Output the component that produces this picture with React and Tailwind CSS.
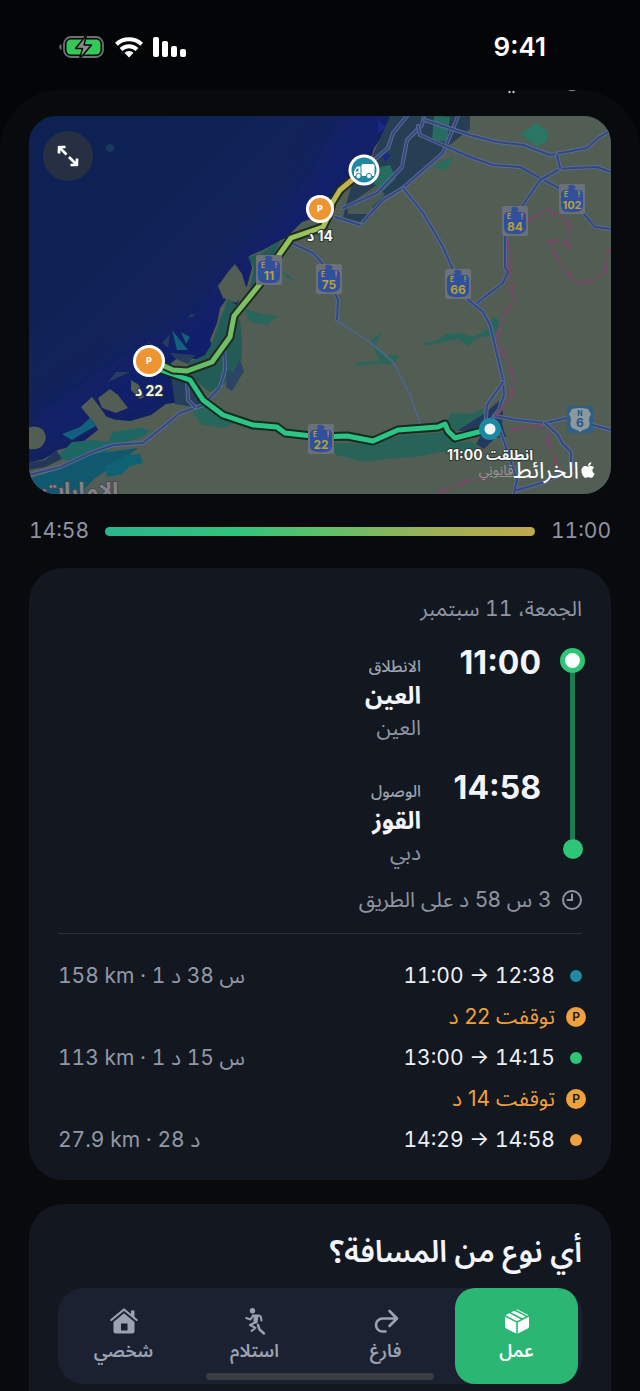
import { useState } from 'react';
import { FaApple } from 'react-icons/fa';

function StatusBar() {
  return (
    <header className="flex h-[90px] items-center justify-between pr-[94px] pl-[58px] pt-1">
      <span dir="ltr" className="text-[26px] leading-8 font-semibold text-white">9:41</span>
      <div dir="ltr" className="flex items-center gap-[10px]">
        <svg width="47" height="24" viewBox="0 0 47 24" aria-label="شحن البطارية" role="img">
          <path d="M3.500 9c-3 1-3 5 0 6z" fill="#6d6f73" />
          <rect x="6" y="2" width="39" height="20" rx="7" fill="none" stroke="#6d6f73" strokeWidth="1.800" />
          <rect x="8.500" y="4.500" width="34" height="15" rx="4.500" fill="#34c759" />
          <path d="M28.500 0 17.500 13.500h7l-3 10.500L33.500 10h-7.500z" fill="#8b8c8e" stroke="#050608" strokeWidth="1.400" strokeLinejoin="round" />
        </svg>
        <svg width="28" height="22" viewBox="0 0 28 22" aria-label="واي فاي" role="img">
          <g fill="none" stroke="#fff" strokeWidth="4">
            <path d="M1.400 8.300a18.500 18.500 0 0 1 25.200 0" />
            <path d="M6 13.500a11.500 11.500 0 0 1 16 0" />
          </g>
          <path d="M14 21.500 9.500 16.800a6.600 6.600 0 0 1 9 0z" fill="#fff" />
        </svg>
        <svg width="33" height="22" viewBox="0 0 33 22" fill="#fff" aria-label="الشبكة" role="img">
          <rect x="0" y="1" width="6" height="20" rx="2" />
          <rect x="9" y="5" width="6" height="16" rx="2" />
          <rect x="18" y="10" width="6" height="11" rx="2" />
          <rect x="27" y="13" width="6" height="8" rx="2" />
        </svg>
      </div>
    </header>
  );
}

const shields = [
  { x: 269, y: 270, n: '11' },
  { x: 329, y: 279, n: '75' },
  { x: 458, y: 284, n: '66' },
  { x: 515, y: 221, n: '84' },
  { x: 572, y: 199, n: '102' },
  { x: 321, y: 439, n: '22' },
];

const roads = [
  'M424 116 422 125 407 140 402 167 377 193 343 208',
  'M407 116 393 133 388 148 374 160',
  'M458 116 443 153 403 188 383 200 363 222',
  'M425 120 470 135 497 142 523 145 550 155 587 148 598 138 611 130',
  'M418 126 420 135 470 157 493 165 520 167 540 178 583 201',
  'M583 213 595 227 611 229',
  'M611 172 597 167 573 168 560 169 540 180 523 205 505 237 505 267 508 272 503 283 477 303',
  'M557 155 560 168',
  'M403 188 423 213 443 247 453 270 466 298 483 312 490 325 503 380 504 395 499 410 485 428',
  'M503 382 487 405 485 430',
  'M495 416 517 420 545 423 567 418M593 425 611 430',
  'M545 423 558 435 562 443 571 452 571 467M500 430 517 480 514 494M517 490 545 482 563 473',
  'M292 243 313 253 322 263 338 300 337 320',
  'M29 475 60 467 93 452 113 445 143 443 163 427 180 413 203 405 220 387 225 370 224 345',
  'M187 378 188 400 195 407M335 217 360 225',
];

function Shield({ x, y, n }) {
  return (
    <g transform={`translate(${x} ${y})`}>
      <rect x="-13" y="-15" width="26" height="30" rx="2" fill="#6c7078" />
      <path d="M-9-9Q-4-8-3-11L-4-13Q0-16 4-12L2-10Q5-8 9-9L11-6V6Q11 11 7 12.500Q0 14-7 12.500Q-11 11-11 6V-6z" fill="#31509c" />
      <g fontWeight="700" fill="#b5a13c" textAnchor="middle">
        <text x="-6" y="-2" fontSize="7">E</text>
        <text x="7" y="-2" fontSize="7">!</text>
        <text x="0" y="10" fontSize={n.length > 2 ? 11 : 12}>{n}</text>
      </g>
    </g>
  );
}

function Parking({ x, y, r }) {
  return (
    <g>
      <circle cx={x} cy={y} r={r} fill="#fff" />
      <circle cx={x} cy={y} r={r - 3} fill="#ee9430" />
      <text x={x} y={y + 3} fontSize="9" fontWeight="800" fill="#fff" textAnchor="middle">P</text>
    </g>
  );
}

function RouteMap() {
  const line = 'M149 361 162 365 173 370 187 371 212 362 230 337 234 316 260 284 279 255 291 238 323 227 328 217 332 203 340 190 364 170';
  const back = 'M149 366 190 380 203 400 223 415 253 425 277 427 285 433 321 437 347 436 373 441 398 430 438 427 445 424 448 431 455 438 490 429';
  return (
    <section className="relative overflow-hidden rounded-[27px]" aria-label="خريطة المسار">
      <svg viewBox="29 116 582 378" className="block w-full" direction="rtl">
        <defs>
          <linearGradient id="sea" gradientUnits="userSpaceOnUse" x1="60" y1="116" x2="270" y2="330">
            <stop offset="0" stopColor="#0d2153" />
            <stop offset="0.450" stopColor="#0f2256" />
            <stop offset="0.750" stopColor="#16245c" />
            <stop offset="1" stopColor="#111f66" />
          </linearGradient>
          <linearGradient id="leg" gradientUnits="userSpaceOnUse" x1="190" y1="370" x2="364" y2="170">
            <stop offset="0" stopColor="#66bd6a" />
            <stop offset="0.700" stopColor="#9cc45a" />
            <stop offset="0.850" stopColor="#bdb950" />
            <stop offset="1" stopColor="#c9a84a" />
          </linearGradient>
          <filter id="soft" x="-30%" y="-30%" width="160%" height="160%">
            <feGaussianBlur stdDeviation="12" />
          </filter>
        </defs>
        <rect x="29" y="116" width="582" height="378" fill="url(#sea)" />
        <path filter="url(#soft)" d="M350 100 300 190 240 250 200 310 140 345 29 420V460L120 420 200 370 270 270 345 200 420 100z" fill="#101e78" opacity="0.500" />
        <circle cx="110" cy="148" r="4" fill="#1d4560" opacity="0.700" />
        <path d="M390 116 384 133 374 148 368 168 350 184 335 204 320 216 302 222 286 238 281 240 263 250 249 256 252 268 247 286 240 297 236 307 228 297 220 308 217 323 210 340 214 350 200 360 180 356 165 368 188 384 180 402 166 404 151 415 130 421 108 419 99 406 92 397 82 408 92 418 98 430 80 444 58 450 44 459 29 463V494H611V116z" fill="#525d54" />
        <path d="M228 272 235 264 242 274 247 290 236 303 223 298 218 286z" fill="#525d54" />
        <path d="M29 427Q44 424 46 437 44 451 29 449z" fill="#525d54" />
        <path d="M98 398 110 389 118 395 128 408 116 413 102 408zM81 407 92 397 97 413 118 421 98 428zM131 380 139 385 144 397 140 399 131 390z" fill="#525d54" />
        <path d="M390 116H470V129L447 147 438 160 402 190 383 200 370 214 360 222 343 218 345 208 352 184 364 180 375 150z" fill="#263f55" />
        <path d="M347 206 378 184 385 195 372 207 378 214 366 214 348 214z" fill="#4c5a55" />
        <path d="M434 116 450 117 447 142 432 140zM432 166 454 157 446 170zM381 167 390 165 396 178 384 190 374 184z" fill="#276c60" />
        <path d="M381 152 391 155 385 162zM378 120 386 128 378 133z" fill="#182a86" />
        <path d="M520 134 536 123 548 131 547 141 537 147z" fill="#2a7564" />
        <path d="M281 240 260 254 248 257 254 268 250 288 238 306 228 299 220 320 212 343 205 355 190 362 182 375 195 380 210 392 224 384 242 358 242 338 240 320 234 316 260 284z" fill="#235c56" />
        <path d="M171 376 190 380 208 400 195 407 175 404z" fill="#263f5a" />
        <path d="M227 370 233 372 240 360 244 371 232 391 226 387z" fill="#2c4466" />
        <path d="M192 412 205 402 240 420 224 428 202 425zM245 309 262 314 278 316 267 325 250 322zM280 270 298 282 287 278z" fill="#27665a" />
        <path d="M172 330 180 340 188 350 177 350zM181 332 190 337 186 344zM62 434 80 427 90 418 96 426 85 432 72 440z" fill="#12607e" />
        <path d="M130 372 108 382 116 372zM162 343 170 334 168 348zM148 342 158 348 153 353zM190 314 196 315 188 318zM170 353 195 355 188 364 176 359z" fill="#263d5e" />
        <path d="M56 458 72 442 93 440 108 442 113 432 140 428 150 430 143 437 116 445 102 455 78 462z" fill="#1d6664" />
        <path d="M31 478 60 469 93 454 138 448 120 462 110 468 95 478 80 494H29z" fill="#10586e" />
        <path d="M105 467 118 460 125 455 140 454 143 463 130 466 122 474 107 477z" fill="#0f6274" />
        <path d="M29 463 45 460 56 450 62 459 45 467 29 470z" fill="#233657" />
        <path d="M424 343 436 341 445 334 460 333 474 337 488 329 492 318Q500 316 499 326L494 335 477 338 468 346 458 339 425 346zM370 340 382 333 375 344 385 355 399 356 394 364 375 364 356 366 355 363 380 361z" fill="#28665c" />
        <path d="M330 443 370 444 400 436 445 432 458 443 470 441 480 448 465 453 440 452 415 457 385 459 365 462 336 455zM447 421 452 413 470 414 485 408 480 420 455 431z" fill="#28635a" />
        <path d="M457 431 485 413 499 401 503 413 502 424 506 437 495 438 484 449 476 444 484 430z" fill="#23395e" />
        <g fill="none" strokeLinejoin="round" strokeLinecap="round">
          {roads.map((d) => (
            <g key={d}>
              <path d={d} stroke="#5a6c93" strokeWidth="4" />
              <path d={d} stroke="#33487f" strokeWidth="2" />
            </g>
          ))}
          <path d="M337 321 370 342 393 362 410 395 420 423" stroke="#4f6586" strokeWidth="2" />
          <g stroke="#764966" strokeWidth="3" strokeDasharray="13 3 3 3" strokeLinecap="butt">
            <path d="M527 222 547 210 563 217 570 227 565 240 570 247 555 240 548 243 567 273 577 283 590 282 605 272 607 252 611 250" />
            <path d="M508 240 510 270 513 300 503 317 497 337 500 350 510 363 513 380 511 397 502 408 495 417" />
            <path d="M510 430 540 425 547 432 548 443 555 457 558 470M438 493 470 480 510 472" />
          </g>
        </g>
        <g transform="translate(580 419)">
          <rect x="-13" y="-13" width="26" height="27" rx="3" fill="#2f5f88" />
          <path d="M-8-10Q0-12 8-10L11-5Q9-2 9 1Q11 8 6 10Q2 11 0 13Q-2 11-6 10Q-11 8-9 1Q-9-2-11-5z" fill="#8c989c" />
          <text x="0" y="-3" fontSize="7" fontWeight="700" fill="#24568a" textAnchor="middle">N</text>
          <text x="0" y="8" fontSize="12" fontWeight="700" fill="#24568a" textAnchor="middle">6</text>
        </g>
        <text x="80" y="498" fontSize="22" fontWeight="700" fill="#858087" stroke="#454955" strokeWidth="2" paintOrder="stroke" textAnchor="middle">الامارات</text>
        <g fill="none" strokeLinejoin="round" strokeLinecap="round">
          <path d={back} stroke="#162a24" strokeWidth="9" />
          <path d={back} stroke="#2dc583" strokeWidth="5" />
          <path d={line} stroke="#202c22" strokeWidth="9" />
          <path d={line} stroke="url(#leg)" strokeWidth="5" />
        </g>
        {shields.map((s) => <Shield key={s.n} {...s} />)}
        <Parking x={320} y={209} r={14} />
        <Parking x={149} y={361} r={16} />
        <circle cx="490" cy="429" r="11" fill="#1e88a0" />
        <circle cx="490" cy="429" r="5.500" fill="#eef2f4" />
        <circle cx="364" cy="170" r="15.500" fill="#fff" />
        <circle cx="364" cy="170" r="12.500" fill="#1e88a0" />
        <g fill="#fff">
          <rect x="361.500" y="164" width="13" height="12" rx="1.500" />
          <path d="M360.500 166.500h-2.500q-1.500 0-2.200 1.500l-1.800 3.500V176h6.500v-9z" />
          <path d="M355.500 171.500 357 168.500h1.500v3z" fill="#1e88a0" />
          <circle cx="358.500" cy="176" r="2.600" stroke="#1e88a0" />
          <circle cx="369" cy="176" r="2.600" stroke="#1e88a0" />
        </g>
        <g fontSize="14" fontWeight="700" fill="#f2f5f4" stroke="#2c3733" strokeWidth="2" paintOrder="stroke" strokeLinejoin="round" textAnchor="middle">
          <text x="320" y="241">14 د</text>
          <text x="149" y="396">22 د</text>
          <text x="490" y="460">انطلقت 11:00</text>
        </g>
      </svg>
      <button type="button" aria-label="تكبير الخريطة" className="absolute top-[15px] left-[14px] flex size-[50px] items-center justify-center rounded-full bg-[#273043]">
        <svg width="22" height="22" viewBox="0 0 22 22" fill="none" stroke="#fff" strokeWidth="2.600" strokeLinejoin="round">
          <path d="M2 8.500V2H8.500M2 2 9.500 9.500M20 13.500V20H13.500M20 20 12 12" />
        </svg>
      </button>
      <div className="absolute right-[14px] bottom-[8px] flex items-center">
        <FaApple className="size-[18px] text-white" />
        <span className="text-[23px] leading-8 text-white">الخرائط</span>
        <a href="#legal" className="text-[14px] leading-5 text-[#8e9791] underline">قانوني</a>
      </div>
    </section>
  );
}

function Stop({ time, label, name, city }) {
  return (
    <div className="flex gap-[30px]">
      <div dir="ltr" className="w-[90px] text-right text-[32px] leading-[34px] font-bold text-[#f3f5fb]">{time}</div>
      <div className="pt-2">
        <div className="text-[16px] leading-6 font-medium text-[#9ca2b0]">{label}</div>
        <div className="text-[24px] leading-[35px] font-bold text-[#f3f5fb]">{name}</div>
        <div className="text-[21px] leading-[30px] text-[#8f95a3]">{city}</div>
      </div>
    </div>
  );
}

function Leg({ dot, range, detail }) {
  return (
    <li className="flex h-[41px] items-center gap-[11px]">
      <span className="-mr-1 flex w-5 justify-center"><span className={`size-3 rounded-full ${dot}`} /></span>
      <span dir="ltr" className="text-[21px] text-[#eef1f8] tabular-nums">{range}</span>
      <span dir="ltr" className="mr-auto text-[21px] text-[#9298a7] tabular-nums">{detail}</span>
    </li>
  );
}

function Pause({ text }) {
  return (
    <li className="flex h-[41px] items-center gap-[11px]">
      <span className="-mr-1 flex size-5 items-center justify-center rounded-full bg-[#f0a03c] text-[12px] font-semibold text-[#141820]">P</span>
      <span className="text-[21px] text-[#f0a03c]">{text}</span>
    </li>
  );
}

const BoxIcon = () => (
  <svg width="26" height="26" viewBox="0 0 26 26" fill="currentColor">
    <path d="M1 8.800 12.200 14.500V25.600L2.300 20.600Q1 19.900 1 18.500zM25 8.800 13.800 14.500V25.600L23.700 20.600Q25 19.900 25 18.500z" />
    <path d="M1.500 7.300 5.200 5.300 16.700 11.200 13 13.200zM7 4.400 10.200 2.700 21.700 8.500 18.600 10.200zM12 1.800Q13 1.200 14 1.800L24.500 7.200 23.300 7.800z" />
  </svg>
);
const TurnIcon = () => (
  <svg width="26" height="26" viewBox="0 0 26 26" fill="none" stroke="currentColor" strokeWidth="2.600" strokeLinecap="round" strokeLinejoin="round">
    <path d="M16.500 3 24 10.500 16.500 18M23.500 10.500H9.500a6.500 6.500 0 0 0 0 13h3" />
  </svg>
);
const RunIcon = () => (
  <svg width="22" height="28" viewBox="0 0 22 28" fill="none" stroke="currentColor" strokeWidth="2" strokeLinecap="round" strokeLinejoin="round">
    <circle cx="8.500" cy="3.700" r="2.700" fill="currentColor" stroke="none" />
    <path d="M9 8.500H14.500Q16.500 8.500 17 10.500L17.500 13.500" />
    <path d="M9 8.500 6.500 12.500 2.200 11" />
    <path d="M10.500 9H13.500L12.500 15.500 10.500 15.500z" fill="currentColor" />
    <path d="M11 15.500 6 18 11.500 20.800 7.500 24" />
    <path d="M14 18 15.500 22.500 20 26.500" strokeWidth="2.400" />
  </svg>
);
const HomeIcon = () => (
  <svg width="28" height="26" viewBox="0 0 28 26">
    <path d="M21 2.500h3.500V10L21 7z" fill="currentColor" />
    <path d="M1.300 12 14 1.500 26.700 12" fill="none" stroke="currentColor" strokeWidth="2.200" strokeLinecap="round" strokeLinejoin="round" />
    <path fillRule="evenodd" d="M14 5.200 24.500 14V23q0 2.500-2.500 2.500H6Q3.500 25.500 3.500 23V14zM11 15.500V22.500H17.500V15.500z" fill="currentColor" />
  </svg>
);

const kinds = [
  { id: 'work', label: 'عمل', Icon: BoxIcon },
  { id: 'empty', label: 'فارغ', Icon: TurnIcon },
  { id: 'pickup', label: 'استلام', Icon: RunIcon },
  { id: 'personal', label: 'شخصي', Icon: HomeIcon },
];

export default function App() {
  const [kind, setKind] = useState('work');
  return (
    <div dir="rtl" lang="ar" className="relative min-h-screen overflow-hidden bg-[#040507] font-['Inter','Noto_Sans_Arabic','DejaVu_Sans',sans-serif]">
      <StatusBar />
      <main className="rounded-t-[60px] bg-[#090a0e] px-[29px]">
        <svg className="block h-[26px] w-full" viewBox="0 0 582 26" aria-hidden="true">
          <path d="M539 0h8q-4 2.500-8 0z" fill="#777a80" />
          <circle cx="480.500" cy="2" r="1.200" fill="#c5c7ca" />
          <circle cx="484.500" cy="2" r="1.200" fill="#c5c7ca" />
        </svg>
        <RouteMap />
        <div className="flex h-[74px] items-center gap-4 text-[21px] text-[#8f93a3] tabular-nums">
          <span>11:00</span>
          <div className="h-[9px] flex-1 rounded-full bg-[linear-gradient(to_right,#2bb58d,#2fc47c_30%,#62bf69_52%,#9db057_76%,#c0a84c)]" />
          <span>14:58</span>
        </div>

        <section className="rounded-[34px] bg-[#131820] px-[29px] pt-6">
          <h2 className="text-[21px] leading-[34px] text-[#8f95a3] tabular-nums">الجمعة، 11 سبتمبر</h2>
          <div className="mt-5 flex gap-[19px]">
            <div className="-mr-[3px] flex w-[25px] flex-col items-center pt-[2px] pb-[9px]">
              <span className="size-[25px] rounded-full border-[5px] border-[#2fc577] bg-white" />
              <span className="w-[5px] flex-1 bg-[#1d7c50]" />
              <span className="size-5 rounded-full bg-[#2fc577]" />
            </div>
            <div className="flex flex-col gap-7">
              <Stop time="11:00" label="الانطلاق" name="العين" city="العين" />
              <Stop time="14:58" label="الوصول" name="القوز" city="دبي" />
            </div>
          </div>
          <div className="mt-[17px] flex items-center gap-[11px] text-[21px] leading-[30px] text-[#8f95a3]">
            <svg width="20" height="20" viewBox="0 0 20 20" fill="none" stroke="currentColor" strokeWidth="2" strokeLinecap="round">
              <circle cx="10" cy="10" r="9" />
              <path d="M10 4.500V10H5.500" />
            </svg>
            <span>3 س 58 د على الطريق</span>
          </div>
          <hr className="mt-[18px] border-[#2b303a]" />
          <ul className="mt-[21px] pb-5">
            <Leg dot="bg-[#1e8ba3]" range="11:00 → 12:38" detail="158 km · 1 س 38 د" />
            <Pause text="توقفت 22 د" />
            <Leg dot="bg-[#2fc577]" range="13:00 → 14:15" detail="113 km · 1 س 15 د" />
            <Pause text="توقفت 14 د" />
            <Leg dot="bg-[#f0a03c]" range="14:29 → 14:58" detail="27.9 km · 28 د" />
          </ul>
        </section>

        <section className="mt-6 rounded-t-[34px] bg-[#131820] px-[29px] pt-6 pb-2">
          <h2 className="text-[30px] leading-[46px] font-semibold text-[#f3f5fb]">أي نوع من المسافة؟</h2>
          <div className="mt-[14px] grid grid-cols-4 rounded-[26px] bg-[#1b2130]">
            {kinds.map(({ id, label, Icon }) => (
              <button
                key={id}
                type="button"
                aria-pressed={kind === id}
                onClick={() => setKind(id)}
                className={`mx-1 flex h-24 flex-col items-center justify-center gap-[2px] rounded-[20px] text-[18px] leading-7 ${kind === id ? 'bg-[#2bb673] text-white' : 'text-[#9ba2b2]'}`}
              >
                <span className="flex h-7 items-center"><Icon /></span>
                <span className="font-semibold">{label}</span>
              </button>
            ))}
          </div>
        </section>
      </main>
      <div className="absolute bottom-3 left-1/2 h-[7px] w-[228px] -translate-x-1/2 rounded-full bg-[#3a3d42]" />
    </div>
  );
}
